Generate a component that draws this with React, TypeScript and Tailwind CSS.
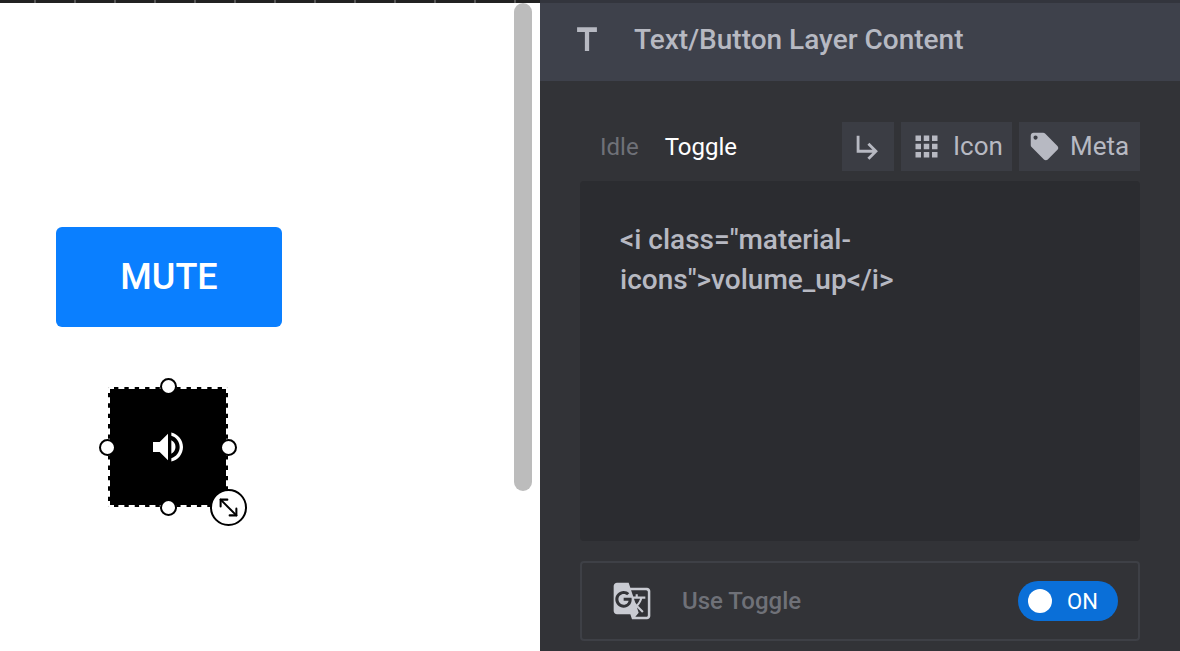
import { MoveDiagonal2 } from "lucide-react";
import {
  MdApps,
  MdGTranslate,
  MdLocalOffer,
  MdSubdirectoryArrowRight,
  MdTitle,
  MdVolumeUp,
} from "react-icons/md";

function Handle({ className }: { className: string }) {
  return (
    <span
      className={`absolute w-[17px] h-[17px] rounded-full bg-white border-2 border-black ${className}`}
    />
  );
}

function Canvas() {
  return (
    <div className="relative w-[540px] h-full bg-white overflow-hidden">
      <div className="h-[3px] bg-[repeating-linear-gradient(90deg,#222_0px,#222_34px,#555_34px,#555_36px,#222_36px,#222_40px)]" />

      <button className="absolute left-[56px] top-[227px] w-[226px] h-[100px] rounded-[6px] bg-[#0a7fff] text-white text-[36px] font-medium">
        MUTE
      </button>

      <div className="absolute left-[108px] top-[387px] w-[120px] h-[120px] rounded-[2px] bg-black outline-2 outline-dashed outline-offset-[-2px] outline-white flex items-center justify-center">
        <MdVolumeUp className="text-white w-[40px] h-[40px]" />
      </div>
      <Handle className="left-[160px] top-[378px]" />
      <Handle className="left-[99px] top-[439px]" />
      <Handle className="left-[220px] top-[439px]" />
      <Handle className="left-[160px] top-[499px]" />
      <span className="absolute left-[210px] top-[489px] w-[37px] h-[37px] rounded-full bg-white border-2 border-black flex items-center justify-center">
        <MoveDiagonal2 className="w-[27px] h-[27px] text-black" strokeWidth={1.8} />
      </span>

      <div className="absolute left-[514px] top-[3px] w-[18px] h-[488px] rounded-full bg-[#bcbcbc]" />
    </div>
  );
}

function ToolButton({ children, className }: { children: React.ReactNode; className: string }) {
  return (
    <div className={`h-[49px] flex items-center bg-[#3b3d44] text-[#b7b9c2] text-[26px] ${className}`}>
      {children}
    </div>
  );
}

function Panel() {
  return (
    <div className="flex-1 h-full flex flex-col bg-[#323337]">
      <div className="h-[81px] shrink-0 flex items-center bg-[#3e414b] border-t-[3px] border-[#33353d] pl-[30px] pb-[4px]">
        <MdTitle className="w-[34px] h-[38px] text-[#b7b9c2]" preserveAspectRatio="none" />
        <span className="ml-[30px] text-[28px] font-medium text-[#b7b9c2]">
          Text/Button Layer Content
        </span>
      </div>

      <div className="flex items-center pl-[60px] pr-[40px] pt-[41px] pb-[10px]">
        <span className="text-[24px] text-[#6f7178]">Idle</span>
        <span className="ml-[26px] text-[24px] text-white">Toggle</span>
        <div className="ml-auto flex gap-[7px]">
          <ToolButton className="w-[52px] justify-center">
            <MdSubdirectoryArrowRight className="w-[34px] h-[34px]" />
          </ToolButton>
          <ToolButton className="w-[111px] pl-[9px] gap-[10px]">
            <MdApps className="w-[33px] h-[33px]" />
            Icon
          </ToolButton>
          <ToolButton className="w-[121px] pl-[9px] gap-[9px]">
            <MdLocalOffer className="w-[33px] h-[33px]" />
            Meta
          </ToolButton>
        </div>
      </div>

      <div className="mx-[40px] h-[360px] rounded-[4px] bg-[#2b2c30] px-[40px] pt-[39px]">
        <p className="w-[300px] text-[28px] leading-[40px] font-medium text-[#b7b9c2]">
          {'<i class="material-icons">volume_up</i>'}
        </p>
      </div>

      <div className="mx-[40px] mt-[20px] h-[80px] rounded-[4px] border-2 border-[#3e4046] flex items-center pl-[30px] pr-[20px]">
        <MdGTranslate className="w-[40px] h-[40px] text-[#c9cbd2]" />
        <span className="ml-[30px] text-[24px] font-medium text-[#6f7178]">Use Toggle</span>
        <div className="ml-auto w-[100px] h-[40px] rounded-full bg-[#0a6fd8] flex items-center pl-[10px]">
          <span className="w-[24px] h-[24px] rounded-full bg-white" />
          <span className="ml-[15px] text-[22px] text-white">ON</span>
        </div>
      </div>
    </div>
  );
}

export default function App() {
  return (
    <div className="flex w-[1180px] h-[651px] overflow-hidden font-['Roboto',sans-serif]">
      <Canvas />
      <Panel />
    </div>
  );
}
